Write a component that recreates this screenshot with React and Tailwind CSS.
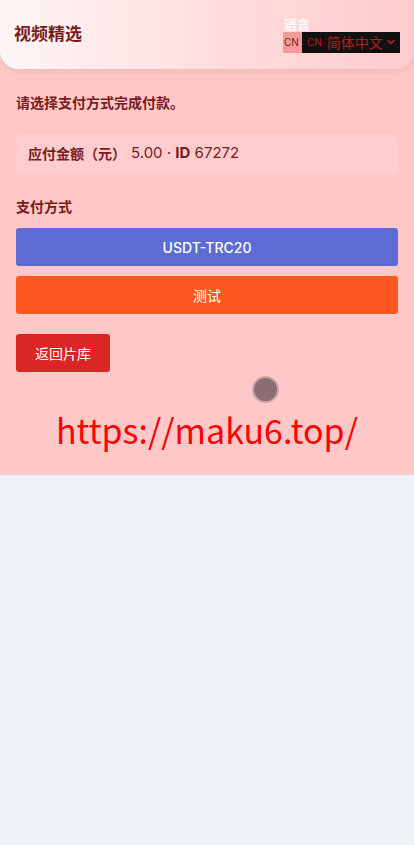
import React from "react";

export default function App() {
  const cjk = { fontFamily: 'Inter, "Noto Sans CJK SC", sans-serif' };
  return (
    <div className="w-[414px] min-h-[845px] bg-[#eef1f5]" style={cjk}>
      <div className="bg-[#ffc8c8] pb-[8px]">
        <header className="h-[69px] rounded-b-[18px] bg-gradient-to-r from-[#fdf6f6] via-[#ffdede] to-[#ffcccc] shadow-[0_2px_6px_rgba(0,0,0,0.08)] flex items-center justify-between pl-[14px] pr-[14px]">
          <div className="text-[17px] font-bold text-[#7a1c1c] mt-[1px]">视频精选</div>
          <div className="flex flex-col items-start -mt-[1px]">
            <div className="text-[13px] font-bold text-white leading-[16px] ml-[1px]">语言</div>
            <div className="flex items-stretch h-[21px]">
              <span className="bg-[#f59a9a] text-[#7a1c1c] text-[10px] leading-[21px] px-[1px] w-[19px]">CN</span>
              <div className="bg-[#111111] flex items-center pl-[5px] pr-[3px] w-[98px]">
                <span className="text-[10px] text-[#b91c1c] mr-[5px]">CN</span>
                <span className="text-[14px] text-[#b91c1c] leading-[21px]">简体中文</span>
                <svg width="12" height="12" viewBox="0 0 24 24" className="ml-[2px]" fill="none" stroke="#b91c1c" strokeWidth="3.5" strokeLinecap="round" strokeLinejoin="round"><path d="M6 9l6 6 6-6" /></svg>
              </div>
            </div>
          </div>
        </header>
        <main className="px-4 pt-[24px]">
          <p className="text-[14px] font-bold text-[#7a1c1c] leading-[20px]">请选择支付方式完成付款。</p>
          <div className="mt-[21px] bg-[#ffcdcd] rounded-[6px] h-[39px] flex items-center px-3 text-[14px] text-[#7a1c1c]">
            <span className="font-bold">应付金额（元）</span>
            <span className="ml-[5px] text-[15px]">5.00 · <span className="font-bold">ID</span> 67272</span>
          </div>
          <p className="mt-[24px] text-[14px] font-bold text-[#7a1c1c] leading-[20px]">支付方式</p>
          <div className="mt-[11px] flex flex-col gap-[10px]">
            <button className="h-[38px] w-full rounded-[3px] bg-[#5e6bd3] text-white text-[14px] font-medium">USDT-TRC20</button>
            <button className="h-[38px] w-full rounded-[3px] bg-[#ff5722] text-white text-[14px] font-normal">测试</button>
          </div>
          <button className="mt-[20px] h-[38px] w-[94px] rounded-[3px] bg-[#dc2626] text-white text-[14px] font-normal">返回片库</button>
          <div className="flex justify-center mt-[6px] pl-[116px]">
            <div className="w-[23px] h-[23px] rounded-full bg-[#8a6e74] shadow-[0_0_0_2px_rgba(170,140,146,0.6)]" />
          </div>
          <div className="text-center text-[#ff0000] text-[34px] leading-[46px] mt-[6px] pb-[14px]" style={{ fontFamily: '"Noto Sans CJK SC", "Noto Sans", sans-serif' }}>https://maku6.top/</div>
        </main>
      </div>
    </div>
  );
}
